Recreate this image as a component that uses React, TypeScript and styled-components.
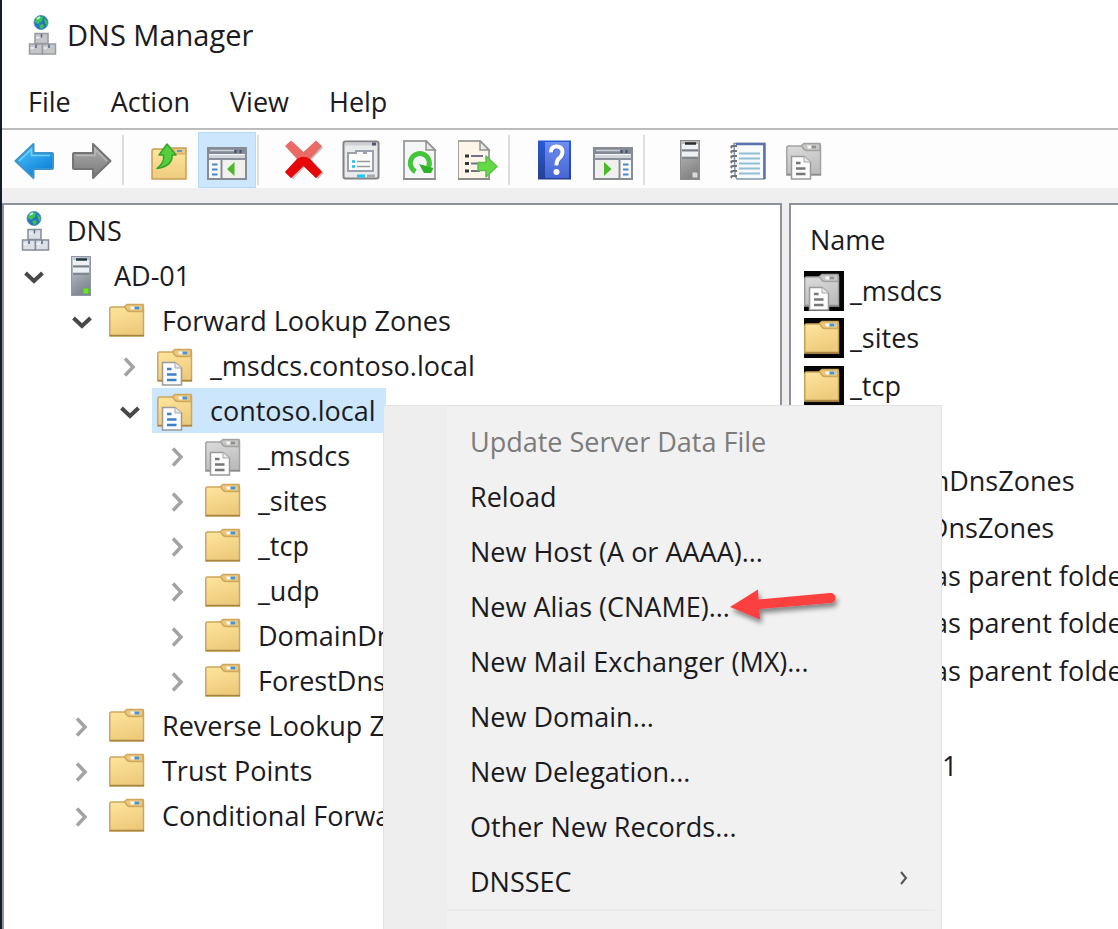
import React from "react";
import styled, { createGlobalStyle } from "styled-components";

const GlobalStyle = createGlobalStyle`
  * { box-sizing: border-box; }
  html, body { margin: 0; height: 100%; overflow: hidden; }
  body, button {
    font-family: "Open Sans", "Noto Sans", sans-serif;
    font-size: 27px;
    line-height: 40px;
    color: #1b1b1f;
  }
`;

const Window = styled.div`
  position: relative;
  display: flex;
  flex-direction: column;
  height: 100vh;
  overflow: hidden;
  background: #efefef;
  border-left: 2px solid #141b2a;
`;

const TitleBar = styled.header`
  display: flex;
  align-items: center;
  gap: 6px;
  height: 70px;
  padding: 0 19px;
  background: #fff;
`;

const Title = styled.h1`
  margin: 0;
  font-size: 29px;
  font-weight: 400;
`;

const MenuBar = styled.nav`
  display: flex;
  height: 60px;
  padding: 6px 6px 0;
  background: #fff;
  border-bottom: 2px solid #bcbcbc;
`;

const MenuBarItem = styled.button`
  padding: 0 20px;
  border: 0;
  background: none;
`;

const Toolbar = styled.div`
  display: flex;
  align-items: center;
  height: 58px;
  padding: 2px 3px 0;
  background: #fdfdfd;
`;

const ToolButton = styled.button<{ $active?: boolean }>`
  display: flex;
  align-items: center;
  justify-content: center;
  width: 58px;
  height: 56px;
  padding: 0;
  border: 1px solid ${(p) => (p.$active ? "#b5dbfb" : "transparent")};
  background: ${(p) => (p.$active ? "#cce6fd" : "none")};
`;

const Separator = styled.span`
  width: 2px;
  height: 50px;
  margin: 0 16px 0 1px;
  background: #dedede;
`;

const Panes = styled.main`
  display: flex;
  flex: 1;
  gap: 7px;
  min-height: 0;
  padding-top: 15px;
`;

const TreePane = styled.section`
  flex: 0 1 780px;
  min-width: 0;
  overflow: hidden;
  padding-top: 3px;
  background: #fff;
  border: 2px solid #8c919b;
  border-bottom: 0;
`;

const ListPane = styled.section`
  flex: 1;
  min-width: 0;
  overflow: hidden;
  background: #fff;
  border: 2px solid #8c919b;
  border-width: 2px 0 0 2px;
`;

const Tree = styled.ul`
  margin: 0;
  padding: 0;
  list-style: none;
`;

const TreeRow = styled.li<{ $level: number }>`
  display: flex;
  align-items: center;
  height: 45px;
  padding-left: ${(p) => (p.$level === 0 ? 5 : p.$level * 48 - 40)}px;
`;

const Expander = styled.button`
  display: flex;
  align-items: center;
  justify-content: center;
  width: 44px;
  height: 45px;
  padding: 0;
  border: 0;
  background: none;
`;

const TreeLabel = styled.button<{ $selected?: boolean }>`
  display: flex;
  align-items: center;
  gap: 13px;
  height: 45px;
  padding: 0 10px 0 5px;
  border: 0;
  white-space: nowrap;
  background: ${(p) => (p.$selected ? "#cce6fd" : "none")};
`;

const RecordTable = styled.table`
  height: 585px;
  border-collapse: collapse;
  white-space: nowrap;
`;

const NameHeader = styled.th`
  height: 62px;
  padding: 8px 19px 0;
  text-align: left;
  font-weight: 400;
  vertical-align: middle;
`;

const RecordCell = styled.td`
  padding: 0 0 0 13px;
  vertical-align: middle;
`;

const RecordName = styled.span`
  display: flex;
  align-items: center;
  gap: 6px;
`;

const ContextMenu = styled.div`
  position: absolute;
  top: 405px;
  left: 381px;
  width: 559px;
  height: 560px;
  padding-top: 8px;
  background: linear-gradient(to right, #eeeeee 63px, #f1f1f1 63px);
  border: 1px solid #e2e2e2;
`;

const MenuItem = styled.button`
  display: flex;
  align-items: center;
  justify-content: space-between;
  width: 100%;
  height: 55px;
  padding: 0 30px 0 86px;
  border: 0;
  background: none;
  &:disabled { color: #7b7b7b; }
`;

const MenuRule = styled.hr`
  height: 2px;
  margin: 0 6px 0 63px;
  border: 0;
  background: #ebebeb;
`;

const Pointer = styled.svg`
  position: absolute;
  top: 580px;
  left: 720px;
`;

type IconName =
  | "dns" | "dnsTitle" | "server" | "serverGrey" | "folder" | "zone" | "zoneGrey"
  | "back" | "forward" | "up" | "consoleTree" | "remove" | "properties"
  | "refresh" | "exportList" | "help" | "actionPane" | "notebook";

const Gradient = ({ id, from, to, x2 = 0 }: { id: string; from: string; to: string; x2?: number }) => (
  <linearGradient id={id} x1="0" y1="0" x2={x2} y2="1">
    <stop offset="0" stopColor={from} />
    <stop offset="1" stopColor={to} />
  </linearGradient>
);

const Folder = ({ grey }: { grey?: boolean }) => {
  const id = grey ? "folderGrey" : "folderYellow";
  const edge = grey ? "#a2a2a2" : "#cda75c";
  return (
    <>
      <Gradient id={id} from={grey ? "#dedede" : "#ffe7a0"} to={grey ? "#bdbdbd" : "#eecb7c"} x2={0.3} />
      <path d="M0.8 8Q0.8 6 2.5 6H15.500L18 4H32.500Q34.500 4 34.500 6V35H0.8Z" fill={`url(#${id})`} stroke={edge} strokeWidth="1.5" />
      <path d="M15.500 5.500L18 3.500H34V10.500H21Q18 10.500 16.500 7Z" fill={grey ? "#c6c6c6" : "#ecc67a"} stroke={edge} strokeWidth="1.5" />
      <path d="M21 5.500H31V8.500H22Z" fill="#f7f5ec" />
      <path d="M25.500 5.500H30.500V8.500H25.500Z" fill={grey ? "#8f8f8f" : "#4a92c8"} />
      <path d="M1 34.500H35" stroke={grey ? "#8c8c8c" : "#a88440"} strokeWidth="1.5" />
    </>
  );
};

const Page = ({ grey }: { grey?: boolean }) => (
  <>
    <path d="M5.500 16.500H18L24.500 22V39H5.500Z" fill="#fcfcfc" stroke="#9a9a9a" strokeWidth="1.5" />
    <path d="M18 16.500V22H24.500" fill="#e8e8e8" stroke="#a8a8a8" />
    <path d="M10 23H14.500M10 28.500H19.500M10 34H19.500" stroke={grey ? "#777" : "#3e80c8"} strokeWidth="2.5" />
  </>
);

const Dns = ({ pale }: { pale?: boolean }) => {
  const line = pale ? "#989aa0" : "#858c97";
  const fill = pale ? "#c4c6ca" : "#dde1e7";
  return (
    <>
      <circle cx="20" cy="7.500" r="7" fill="#2473c4" stroke="#5c96c2" strokeWidth="1" />
      <path d="M15 3Q18 0 22 2L21 6L17 9L14 7ZM18 10L22 9L23 12L20 14ZM23 3L26 6V11L24 8Z" fill="#3fc44b" />
      <path d="M16 4L19 2" stroke="#b9f1ed" strokeWidth="2" />
      <rect x="14" y="18.500" width="13" height="10" fill={fill} stroke={line} strokeWidth="1.5" />
      <rect x="8.500" y="29" width="13" height="10" fill={fill} stroke={line} strokeWidth="1.5" />
      <rect x="21.500" y="29" width="13" height="10" fill={fill} stroke={line} strokeWidth="1.5" />
      <path d="M20.500 19V22.500M15 29.500V33M28 29.500V33" stroke="#526784" strokeWidth="1.5" />
      <path d="M15 22.500H18.500M9.500 33H13M22.500 33H26" stroke="#f3f4f7" strokeWidth="1.5" />
    </>
  );
};

const Server = ({ grey }: { grey?: boolean }) => {
  const id = grey ? "serverGreyBody" : "serverBody";
  return (
    <>
      <Gradient id={id} from={grey ? "#c4c4c4" : "#cbd1d9"} to={grey ? "#858585" : "#808791"} x2={0.3} />
      <rect x="10.500" y="0.5" width="19" height="39" fill={`url(#${id})`} stroke={grey ? "#8d8d8d" : "#9198a3"} />
      <path d="M12 6.500H28M12 14H28" stroke="#eef1f4" strokeWidth="5" />
      <path d="M15 3.500H26" stroke={grey ? "#2b2b2b" : "#22393f"} strokeWidth="2.5" />
      <path d="M12 10.500H28M12 18H28" stroke="#767d87" strokeWidth="1.5" />
      <rect x="22.500" y="32.500" width="5" height="5" fill={grey ? "#dadada" : "#5ef008"} />
    </>
  );
};

const Frame = () => (
  <>
    <rect x="1" y="8" width="38" height="31" fill="#f7f8fa" stroke="#868b94" strokeWidth="2" />
    <rect x="2" y="9" width="36" height="5" fill="#858b96" />
    <path d="M3 10.500H27" stroke="#cdd2da" strokeWidth="1.5" />
    <path d="M28.500 10V13M33.500 10V13" stroke="#3e4f72" strokeWidth="2" />
    <path d="M2 16.500H38" stroke="#d2d5db" strokeWidth="3" />
    <path d="M2 19H38" stroke="#8b909a" strokeWidth="2" />
  </>
);

const SheetOutline = ({ fill }: { fill: string }) => (
  <>
    <path d="M4 1H26L35 10V39H4Z" fill={fill} stroke="#a3a3a3" strokeWidth="2" />
    <path d="M26 1V10H35Z" fill="#e9e9e9" stroke="#929292" strokeWidth="1.5" />
    <path d="M3 39H36" stroke="#858585" strokeWidth="1.5" />
  </>
);

const drawings: Record<IconName, React.ReactNode> = {
  dns: <Dns />,
  dnsTitle: <Dns pale />,
  server: <Server />,
  serverGrey: <Server grey />,
  folder: <Folder />,
  zone: <><Folder /><Page /></>,
  zoneGrey: <><Folder grey /><Page grey /></>,
  back: (
    <>
      <Gradient id="backFill" from="#56c9ff" to="#0a7fd8" x2={0.6} />
      <path d="M1.500 21L19.500 4V13H38Q39 13 39 14V28Q39 29 38 29H19.500V38Z" fill="url(#backFill)" stroke="#3f93cc" strokeWidth="2" strokeLinejoin="round" />
      <path d="M5 21L17.500 9V15.500H36" fill="none" stroke="#6fd2fb" strokeWidth="1.5" />
    </>
  ),
  forward: (
    <>
      <Gradient id="forwardFill" from="#b0b0b0" to="#777" />
      <path d="M38.500 21L21 4V13H2Q1 13 1 14V28Q1 29 2 29H21V38Z" fill="url(#forwardFill)" stroke="#757575" strokeWidth="2" strokeLinejoin="round" />
      <path d="M4 15.500H23V9L35 21" fill="none" stroke="#b8b8b8" strokeWidth="1.5" />
    </>
  ),
  up: (
    <>
      <Gradient id="upFolder" from="#ffe7a0" to="#eecb7c" />
      <path d="M3 11Q3 9 5 9H18L20 8H37V39H3Z" fill="url(#upFolder)" stroke="#c79f55" strokeWidth="1.5" />
      <path d="M24 8.500H36.500V14H26Z" fill="#ecc67a" stroke="#cda75c" />
      <path d="M28 11H33" stroke="#5a9ccc" strokeWidth="2" />
      <path d="M18 4L27 15H23Q24 26 8 28.500Q16 22 14.500 15H10Z" fill="#54cf3e" stroke="#35a32a" strokeWidth="1.5" strokeLinejoin="round" />
    </>
  ),
  consoleTree: (
    <>
      <Frame />
      <path d="M14.500 20V38" stroke="#868b94" strokeWidth="2" />
      <path d="M5 24.500H10.500M5 29.500H10.500M5 34.500H10.500" stroke="#4a86cc" strokeWidth="2" />
      <rect x="16" y="20" width="22" height="18" fill="#f0f1ee" />
      <path d="M27.500 22V36L20 29Z" fill="#4cb92b" />
    </>
  ),
  remove: (
    <>
      <path d="M3 33L15 20L3 7L9 2L21 14L33 2L39 8L27 20L40 33L34 39L21 27L9 39Z" fill="#6e6666" opacity="0.4" />
      <path d="M1 32L13 19L1 6L7 0.5L19.500 12L32 0.5L38 6L26 19L38 32L32 38L19.500 26L7 38Z" fill="#ea6a66" />
      <path d="M13.500 18.500L1 32L7 38L19.500 26L32 38L38 32L26 19Q20 15 13.500 18.500Z" fill="#e60808" />
    </>
  ),
  properties: (
    <>
      <rect x="1.500" y="1.500" width="35" height="37" rx="2" fill="#e9eaec" stroke="#828282" strokeWidth="2" />
      <path d="M3 4H35" stroke="#cfd1d5" strokeWidth="3" />
      <path d="M30 4H34" stroke="#4d5871" strokeWidth="3" />
      <path d="M6 13H14V11H22V13H24V11H31V31H6Z" fill="#fbfbfc" stroke="#9aa1ad" strokeWidth="2" />
      <path d="M10 21.500H13M10 26.500H13" stroke="#26bfe8" strokeWidth="2.5" />
      <path d="M15 21.500H28M15 26.500H28" stroke="#9b9b9b" strokeWidth="1.5" />
      <path d="M15 36H23" stroke="#23c4ee" strokeWidth="3" />
      <path d="M25 36H33" stroke="#a9abb0" strokeWidth="3" />
    </>
  ),
  refresh: (
    <>
      <SheetOutline fill="#f5f6f8" />
      <path d="M15.500 31.500A9.500 9.500 0 1 1 28.500 27" fill="none" stroke="#45c53a" strokeWidth="5" />
      <path d="M19 24L33.500 28L31 33H24Z" fill="#2fb126" />
    </>
  ),
  exportList: (
    <>
      <g transform="translate(-4 0)"><SheetOutline fill="#fdf5e8" /></g>
      <path d="M7 16H11M7 23.500H11M7 31H11" stroke="#343434" strokeWidth="3" />
      <path d="M13 16H25M13 23.500H22M13 31H22" stroke="#74708a" strokeWidth="2" />
      <path d="M20 22.500H28V16L39 26.500L28 37V30.500H20Z" fill="#63da45" stroke="#5cc048" strokeWidth="1.5" strokeLinejoin="round" />
    </>
  ),
  help: (
    <>
      <Gradient id="helpSpine" from="#2a5ad8" to="#263f91" />
      <Gradient id="helpCover" from="#6f8df2" to="#4566d3" />
      <rect x="3" y="0.5" width="33" height="39" fill="url(#helpSpine)" />
      <rect x="10" y="2" width="24" height="36" fill="url(#helpCover)" />
      <path d="M17 13Q17 7 22 7Q28 7 28 12.500Q28 16 25 18Q22 20 22 26" fill="none" stroke="#263e91" strokeWidth="4" opacity="0.5" />
      <path d="M16 12.500Q16 6.500 21.500 6.500Q27.500 6.500 27.500 12Q27.500 15.500 24.500 18Q21.500 20 21.500 25.500" fill="none" stroke="#fff" strokeWidth="4" />
      <circle cx="21.500" cy="32" r="3" fill="#fff" />
    </>
  ),
  actionPane: (
    <>
      <Frame />
      <path d="M26.500 20V38" stroke="#868b94" strokeWidth="2" />
      <rect x="2" y="20" width="23" height="18" fill="#f0f1ee" />
      <path d="M11 22V36L18.500 29Z" fill="#4cb92b" />
      <path d="M30 24.500H35.500M30 29.500H35.500M30 34.500H35.500" stroke="#4a86cc" strokeWidth="2" />
    </>
  ),
  notebook: (
    <>
      <path d="M6 3.500H36V39H9L7 36Z" fill="#f7fbfd" stroke="#8196ad" strokeWidth="1.5" />
      <path d="M8 4H36.500V39" fill="none" stroke="#5d70b2" strokeWidth="2.5" />
      <path d="M11 13.500H32M11 18.500H32M11 23.500H32M11 28.500H32M11 33.500H32" stroke="#91bfd5" strokeWidth="2" />
      {[6, 11, 16, 21, 26, 31, 36].map((y) => (
        <path key={y} d={`M9 ${y}H5Q2 ${y} 4 ${y + 2}`} fill="none" stroke="#747474" strokeWidth="2" />
      ))}
    </>
  ),
};

const IconSvg = styled.svg`
  flex-shrink: 0;
`;

const Icon = ({ name, boxed }: { name: IconName; boxed?: boolean }) => (
  <IconSvg width="40" height="40" viewBox="0 0 40 40" aria-hidden="true">
    {boxed && <rect width="40" height="40" fill="#050505" />}
    {drawings[name]}
  </IconSvg>
);

const Chevron = ({ open }: { open?: boolean }) => (
  <svg width="22" height="22" viewBox="0 0 22 22" aria-hidden="true">
    {open ? (
      <path d="M2.500 8L11 16L19.500 8" fill="none" stroke="#484848" strokeWidth="4" />
    ) : (
      <path d="M6 3.500L14 12L6 20.500" fill="none" stroke="#a3a3a3" strokeWidth="3.500" />
    )}
  </svg>
);

type Node = { level: number; label: string; icon: IconName; open?: boolean; selected?: boolean };

const nodes: Node[] = [
  { level: 0, label: "DNS", icon: "dns" },
  { level: 1, label: "AD-01", icon: "server", open: true },
  { level: 2, label: "Forward Lookup Zones", icon: "folder", open: true },
  { level: 3, label: "_msdcs.contoso.local", icon: "zone" },
  { level: 3, label: "contoso.local", icon: "zone", open: true, selected: true },
  { level: 4, label: "_msdcs", icon: "zoneGrey" },
  { level: 4, label: "_sites", icon: "folder" },
  { level: 4, label: "_tcp", icon: "folder" },
  { level: 4, label: "_udp", icon: "folder" },
  { level: 4, label: "DomainDnsZones", icon: "folder" },
  { level: 4, label: "ForestDnsZones", icon: "folder" },
  { level: 2, label: "Reverse Lookup Zones", icon: "folder" },
  { level: 2, label: "Trust Points", icon: "folder" },
  { level: 2, label: "Conditional Forwarders", icon: "folder" },
];

const records: { name: string; icon: IconName }[] = [
  { name: "_msdcs", icon: "zoneGrey" },
  { name: "_sites", icon: "folder" },
  { name: "_tcp", icon: "folder" },
  { name: "_udp", icon: "folder" },
  { name: "DomainDnsZones", icon: "folder" },
  { name: "ForestDnsZones", icon: "folder" },
  { name: "(same as parent folder)", icon: "folder" },
  { name: "(same as parent folder)", icon: "folder" },
  { name: "(same as parent folder)", icon: "folder" },
  { name: "ad-01", icon: "folder" },
  { name: "client-01", icon: "folder" },
];

const toolGroups: { icon: IconName; label: string; active?: boolean }[][] = [
  [{ icon: "back", label: "Back" }, { icon: "forward", label: "Forward" }],
  [{ icon: "up", label: "Up one level" }, { icon: "consoleTree", label: "Show or hide console tree", active: true }],
  [
    { icon: "remove", label: "Delete" },
    { icon: "properties", label: "Properties" },
    { icon: "refresh", label: "Refresh" },
    { icon: "exportList", label: "Export list" },
  ],
  [{ icon: "help", label: "Help" }, { icon: "actionPane", label: "Show or hide action pane" }],
  [
    { icon: "serverGrey", label: "New server" },
    { icon: "notebook", label: "Filter records" },
    { icon: "zoneGrey", label: "New zone" },
  ],
];

const menuItems = [
  { label: "Update Server Data File", disabled: true },
  { label: "Reload" },
  { label: "New Host (A or AAAA)..." },
  { label: "New Alias (CNAME)..." },
  { label: "New Mail Exchanger (MX)..." },
  { label: "New Domain..." },
  { label: "New Delegation..." },
  { label: "Other New Records..." },
  { label: "DNSSEC", submenu: true },
];

export default function App() {
  return (
    <Window>
      <GlobalStyle />
      <TitleBar>
        <Icon name="dnsTitle" />
        <Title>DNS Manager</Title>
      </TitleBar>
      <MenuBar>
        {["File", "Action", "View", "Help"].map((m) => (
          <MenuBarItem key={m}>{m}</MenuBarItem>
        ))}
      </MenuBar>
      <Toolbar>
        {toolGroups.map((group, i) => (
          <React.Fragment key={i}>
            {i > 0 && <Separator />}
            {group.map((t) => (
              <ToolButton key={t.label} aria-label={t.label} $active={t.active}>
                <Icon name={t.icon} />
              </ToolButton>
            ))}
          </React.Fragment>
        ))}
      </Toolbar>
      <Panes>
        <TreePane>
          <Tree>
            {nodes.map((n) => (
              <TreeRow key={n.label + n.level} $level={n.level}>
                {n.level > 0 && (
                  <Expander aria-label={(n.open ? "Collapse " : "Expand ") + n.label}>
                    <Chevron open={n.open} />
                  </Expander>
                )}
                <TreeLabel $selected={n.selected}>
                  <Icon name={n.icon} />
                  {n.label}
                </TreeLabel>
              </TreeRow>
            ))}
          </Tree>
        </TreePane>
        <ListPane>
          <RecordTable>
            <thead>
              <tr><NameHeader>Name</NameHeader></tr>
            </thead>
            <tbody>
              {records.map((r, i) => (
                <tr key={i}>
                  <RecordCell>
                    <RecordName><Icon name={r.icon} boxed />{r.name}</RecordName>
                  </RecordCell>
                </tr>
              ))}
            </tbody>
          </RecordTable>
        </ListPane>
      </Panes>
      <ContextMenu role="menu">
        {menuItems.map((m) => (
          <MenuItem key={m.label} role="menuitem" disabled={m.disabled}>
            {m.label}
            {m.submenu && (
              <svg width="14" height="24" viewBox="0 0 14 24" aria-hidden="true">
                <path d="M4 2L9 8L4 14" fill="none" stroke="#555" strokeWidth="2" />
              </svg>
            )}
          </MenuItem>
        ))}
        <MenuRule />
      </ContextMenu>
      <Pointer width="124" height="56" viewBox="0 0 124 56" aria-hidden="true">
        <defs>
          <filter id="pointerShadow" x="-10%" y="-30%" width="125%" height="180%">
            <feDropShadow dx="2" dy="4" stdDeviation="2.500" floodColor="#000" floodOpacity="0.45" />
          </filter>
        </defs>
        <g filter="url(#pointerShadow)">
          <path d="M8 27L36 9.500L36.500 19.500L108 13A5 5 0 0 1 109 23L37.500 29L38 39.500Z" fill="#fb4141" />
        </g>
      </Pointer>
    </Window>
  );
}
